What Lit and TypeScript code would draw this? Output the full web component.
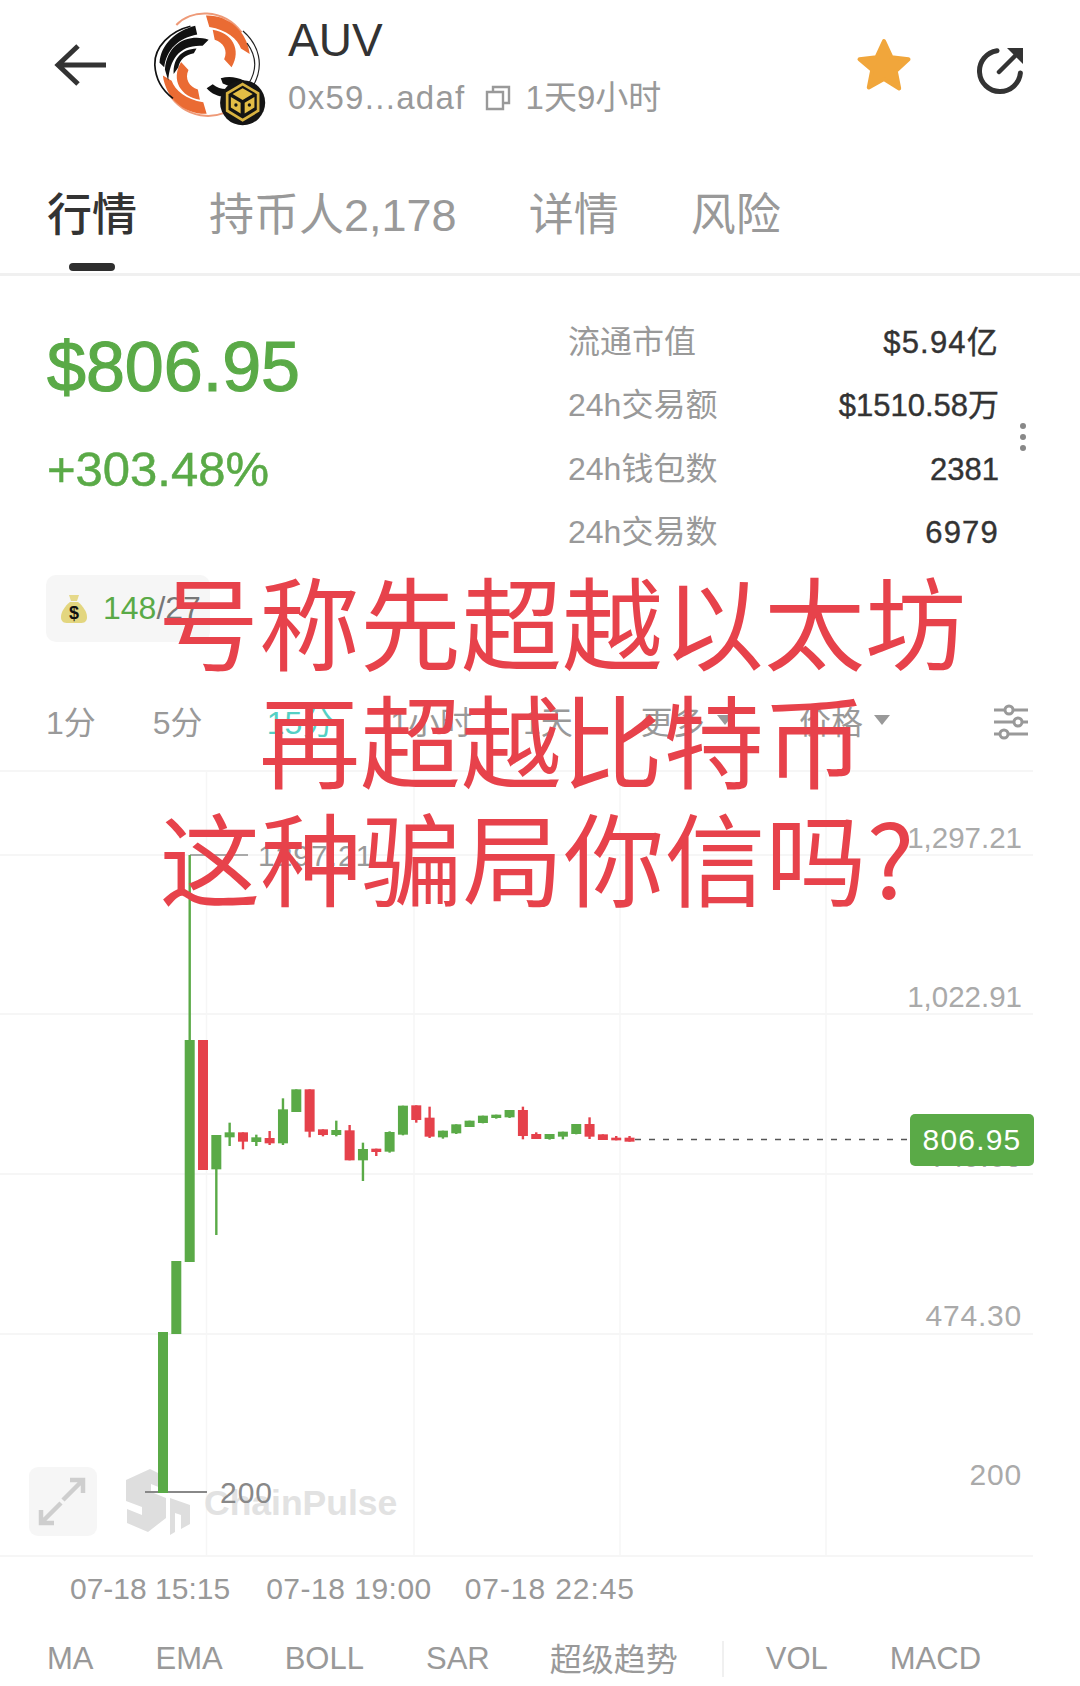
import { LitElement, html, css, svg } from "lit";
import { customElement } from "lit/decorators.js";

const G = "#5aaa47";
const R = "#e5414b";
type C = [number, number, number, number, number, 0 | 1]; // x, bodyTop, bodyBottom, wickTop, wickBottom, red?
const z5 = (i: number, a: number, b: number, c: number, d: number, r: 0 | 1): C => [163 + i * 13.33, 1020 + a / 3, 1020 + b / 3, 1020 + c / 3, 1020 + d / 3, r];
const z6 = (i: number, a: number, b: number, c: number, d: number, r: 0 | 1): C => [163 + i * 13.33, 1080 + a / 3, 1080 + b / 3, 1080 + c / 3, 1080 + d / 3, r];
const candles: C[] = [
  [163, 1332, 1493, 1332, 1493, 0],
  [176.3, 1261, 1334, 1261, 1334, 0],
  [189.7, 1040, 1262, 855, 1262, 0],
  z5(3, 60, 450, 60, 450, 1),
  z5(4, 345, 448, 345, 645, 0),
  z5(5, 337, 352, 308, 378, 0),
  z5(6, 337, 365, 337, 388, 1),
  z5(7, 352, 366, 344, 378, 0),
  z5(8, 354, 370, 333, 375, 1),
  z5(9, 268, 370, 235, 375, 0),
  z5(10, 208, 276, 208, 276, 0),
  z5(11, 208, 335, 208, 352, 1),
  z5(12, 328, 345, 328, 349, 1),
  z5(13, 330, 345, 302, 349, 0),
  z5(14, 331, 421, 315, 421, 1),
  z5(15, 387, 421, 368, 483, 0),
  z5(16, 386, 396, 386, 408, 1),
  z5(17, 336, 395, 334, 398, 0),
  z5(18, 257, 344, 257, 346, 0),
  z5(19, 256, 300, 256, 308, 1),
  z5(20, 293, 350, 260, 354, 1),
  z6(21, 152, 172, 152, 176, 0),
  z6(22, 133, 160, 133, 162, 0),
  z6(23, 122, 141, 122, 141, 0),
  z6(24, 107, 129, 107, 130, 0),
  z6(25, 104, 114, 104, 116, 0),
  z6(26, 90, 112, 90, 114, 0),
  z6(27, 90, 168, 80, 178, 1),
  z6(28, 162, 177, 157, 177, 1),
  z6(29, 162, 177, 162, 179, 0),
  z6(30, 155, 170, 155, 178, 0),
  z6(31, 132, 162, 132, 163, 0),
  z6(32, 132, 170, 112, 177, 1),
  z6(33, 163, 180, 163, 180, 1),
  z6(34, 173, 181, 168, 181, 1),
  z6(35, 173, 185, 168, 185, 1),
];

const orange = svg`
  <path d="M108 74C150 28 245 22 302 96" fill="none" stroke="#ee9a78" stroke-width="6"/>
  <path d="M196 46C262 44 318 92 326 160L300 144C290 116 258 88 206 80z" fill="#ea6b33"/>
  <path d="M216 88C272 96 304 146 272 200L250 176C262 150 248 126 222 118z" fill="#ea6b33"/>
`;

@customElement("app-root")
export class AppRoot extends LitElement {
  static styles = css`
    :host { display: block; width: 1080px; height: 1686px; overflow: hidden; position: relative; background: #fff;
      font-family: "Liberation Sans", "Noto Sans CJK SC", sans-serif; color: #333; }
    .header { height: 133px; display: flex; align-items: flex-start; }
    .back { width: 60px; height: 50px; margin: 40px 0 0 52px; flex: none; }
    .logo { width: 140px; height: 130px; margin-left: 28px; flex: none; }
    .title { margin-left: 8px; padding-top: 12px; flex: 1; }
    .name { font-size: 46px; line-height: 56px; }
    .sub { display: flex; align-items: center; font-size: 33px; line-height: 44px; color: #999; margin-top: 8px; }
    .addr { letter-spacing: 1.3px; }
    .sub svg { width: 28px; height: 28px; margin: 0 14px 0 18px; }
    .star { width: 66px; height: 66px; margin: 32px 0 0 0; flex: none; }
    .share { width: 54px; height: 54px; margin: 43px 52px 0 57px; flex: none; }

    .tabs { height: 140px; border-bottom: 3px solid #f0f0f0; display: flex; gap: 72px; padding-left: 47px; font-size: 45px; line-height: 60px; color: #999; }
    .tabs span { padding-top: 53px; }
    .tabs .on { color: #333; font-weight: 500; position: relative; }
    .tabs .on::after { content: ""; position: absolute; left: 22px; right: 22px; top: 130px; height: 8px; background: #2e2e2e; border-radius: 4px; }

    .stats { display: flex; padding: 31px 0 0 47px; }
    .price { width: 521px; flex: none; color: #5aaa47; }
    .big { font-size: 70px; line-height: 80px; margin-top: 20px; -webkit-text-stroke: 1.2px #5aaa47; }
    .chg { font-size: 49px; line-height: 60px; margin-top: 32px; -webkit-text-stroke: 0.5px #5aaa47; }
    .grid { width: 431px; flex: none; margin-top: 3.5px; }
    .row { display: flex; justify-content: space-between; height: 63.5px; line-height: 63.5px; align-items: baseline; font-size: 32px; color: #999; }
    .row b { font-weight: 400; color: #333; font-size: 31px; -webkit-text-stroke: 0.4px #333; }
    .row b.wide { letter-spacing: 1.2px; }
    .dots { margin: 3px 0 0 21px; align-self: center; width: 6px; display: flex; flex-direction: column; gap: 5px; }
    .dots i { display: block; width: 6px; height: 6px; border-radius: 50%; background: #888; }

    .badge { margin: 10.5px 0 0 46px; width: 164px; height: 67px; border-radius: 10px; background: #f6f6f6; display: flex; align-items: center; box-sizing: border-box; padding-left: 14px; font-size: 32px; color: #5aaa47; }
    .badge svg { width: 28px; height: 30px; margin-right: 15px; }
    .badge em { font-style: normal; color: #777; }

    .periods { margin-top: 48px; height: 60px; padding-left: 46px; display: flex; align-items: center; font-size: 32px; color: #999; }
    .periods .p2 { margin-left: 57px; }
    .periods .p3 { margin-left: 64px; color: #55d0c4; }
    .periods .p4 { margin-left: 56px; }
    .periods .p5 { margin-left: 51px; }
    .periods .more { margin-left: 68px; display: flex; align-items: center; gap: 12px; }
    .periods .px { margin-left: 66px; display: flex; align-items: center; gap: 11px; }
    .periods i { display: block; width: 0; height: 0; border-left: 8px solid transparent; border-right: 8px solid transparent; border-top: 10px solid #999; }
    .periods svg { width: 36px; height: 36px; margin: 4px 51px 0 auto; }

    .chart { margin-top: 20px; height: 787px; }
    .chart svg { display: block; width: 1080px; height: 787px; }
    .chart text { font-family: "Liberation Sans", sans-serif; font-size: 30px; }
    .ax { fill: #aaa; }
    .ax1 { letter-spacing: 0.8px; }
    .ax2 { fill: #999; letter-spacing: 1px; }
    .chart text.wm { font-weight: 700; font-size: 35.5px; fill: #e2e2e2; }
    .tag { fill: #fff; letter-spacing: 1.2px; }

    .times { margin-top: 12px; height: 40px; display: flex; padding-left: 70px; font-size: 30px; line-height: 40px; color: #999; }
    .t2 { margin-left: 36px; letter-spacing: 0.5px; }
    .t3 { margin-left: 33px; letter-spacing: 0.9px; }
    .inds { margin-top: 28px; height: 44px; display: flex; align-items: center; gap: 62px; padding-left: 47px; font-size: 31px; color: #999; }
    .inds .zh { font-size: 32px; margin: 0 0 4px -2px; }
    .inds .div { width: 2px; height: 36px; background: #f0f0f0; margin: 0 -20px 0 -18px; }

    .overlay { position: absolute; left: 158px; top: 560px; width: 808px; text-align: center; font-size: 101px; line-height: 118px; color: #e7424b; font-family: "Noto Sans CJK SC", sans-serif; pointer-events: none; white-space: nowrap; }
    .overlay div:last-child { padding-right: 50px; }
  `;

  render() {
    return html`
      <div class="header">
        <svg class="back" viewBox="0 0 60 50"><path d="M54 25H8M26 6L6 25l20 19" fill="none" stroke="#333" stroke-width="5"/></svg>
        <svg class="logo" viewBox="0 0 416 386">
          ${orange}
          <g transform="rotate(180 197 192)">${orange}</g>
          <path d="M150 78C90 92 42 140 44 192 46 232 66 268 98 292" fill="none" stroke="#111" stroke-width="5"/>
          <path d="M164 76C104 92 62 132 58 186L72 200C78 146 116 112 170 102z" fill="#111"/>
          <path d="M204 118C150 100 82 122 74 206L84 240C88 176 118 132 186 136z" fill="#111"/>
          <path d="M168 144C124 146 98 172 100 220L114 200C118 176 136 162 160 158z" fill="#111"/>
          <path d="M306 92C352 132 372 192 336 256" fill="none" stroke="#222" stroke-width="3.5"/>
          <path d="M318 128C346 166 350 206 322 250" fill="none" stroke="#222" stroke-width="3.5"/>
          <path d="M240 232C264 226 286 228 310 240L280 262 246 248z" fill="#111"/>
          <path d="M198 262L216 250C232 262 246 266 262 264L264 286C240 290 216 282 198 262z" fill="#111"/>
          <circle cx="305" cy="305" r="67" fill="#141414"/>
          <path d="M305 250l46 27v52l-46 28-46-28v-52z" fill="none" stroke="#d8b240" stroke-width="8"/>
          <path d="M305 262l30 17-30 18-30-18zM270 288l29 17v32l-29-18zM340 288l-29 17v32l29-18z" fill="#e3bd45"/>
          <circle cx="285" cy="312" r="5" fill="#141414"/><circle cx="325" cy="312" r="5" fill="#141414"/>
        </svg>
        <div class="title">
          <div class="name">AUV</div>
          <div class="sub"><span class="addr">0x59...adaf</span><svg viewBox="0 0 28 28"><path d="M9 8V3h16v16h-6M3 8h16v17H3z" fill="none" stroke="#999" stroke-width="2.4"/></svg>1天9小时</div>
        </div>
        <svg class="star" viewBox="0 0 66 66"><path d="M33 9l7.4 16.2 17.1 2-12.7 11.9 3.4 17.4L33 47l-15.2 8.5 3.4-17.4L8.500 27.200l17.100-2z" fill="#f1a63b" stroke="#f1a63b" stroke-width="4" stroke-linejoin="round"/></svg>
        <svg class="share" viewBox="0 0 54 54"><path d="M23 7.700A20.500 20.500 0 1 0 46.400 30" fill="none" stroke="#333" stroke-width="5" stroke-linecap="round"/><path d="M25 29L41 13" stroke="#333" stroke-width="4.500" stroke-linecap="round"/><path d="M33 5h16v16z" fill="#333"/></svg>
      </div>

      <div class="tabs">
        <span class="on">行情</span><span>持币人2,178</span><span>详情</span><span>风险</span>
      </div>

      <div class="stats">
        <div class="price"><div class="big">$806.95</div><div class="chg">+303.48%</div></div>
        <div class="grid">
          <div class="row"><span>流通市值</span><b class="wide">$5.94亿</b></div>
          <div class="row"><span>24h交易额</span><b>$1510.58万</b></div>
          <div class="row"><span>24h钱包数</span><b>2381</b></div>
          <div class="row"><span>24h交易数</span><b class="wide">6979</b></div>
        </div>
        <div class="dots"><i></i><i></i><i></i></div>
      </div>

      <div class="badge">
        <svg viewBox="0 0 28 30"><path d="M9 1h10l-2 6h-6z" fill="#e6d98a"/><path d="M10 8h8c5 4 9 10 9 15 0 5-3 6-7 6H8c-4 0-7-1-7-6 0-5 4-11 9-15z" fill="#e3d67f"/><text x="14" y="25" text-anchor="middle" font-family="Liberation Sans" font-weight="700" font-size="18" fill="#111">$</text></svg>
        <span>148<em>/27</em></span>
      </div>

      <div class="periods">
        <span>1分</span><span class="p2">5分</span><span class="p3">15分</span><span class="p4">1小时</span><span class="p5">1天</span>
        <span class="more">更多<i></i></span>
        <span class="px">价格<i></i></span>
        <svg viewBox="0 0 36 36" fill="none" stroke="#999" stroke-width="3"><path d="M1 6h11M20 6h15M1 18h20M29 18h6M1 30h6M15 30h20"/><circle cx="16" cy="6" r="4"/><circle cx="25" cy="18" r="4"/><circle cx="11" cy="30" r="4"/></svg>
      </div>

      <div class="chart">
        <svg viewBox="0 770 1080 787">
          ${[771, 855, 1014, 1174, 1334, 1556].map((y) => svg`<line x1="0" x2="1033" y1=${y} y2=${y} stroke="#f3f3f3" stroke-width="1.5"/>`)}
          ${[206.5, 414, 620, 826].map((x) => svg`<line x1=${x} x2=${x} y1="770" y2="1557" stroke="#f6f6f6" stroke-width="1.5"/>`)}

          <rect x="29" y="1467" width="68" height="69" rx="9" fill="#f6f6f6"/>
          <path d="M70 1480h13v13M83 1480l-20 20M41 1510v13h13M41 1523l20-20" fill="none" stroke="#cecece" stroke-width="4.500"/>
          <path d="M150 1469l16 8v13l-15-6v8l15 6v20l-18 14-21-9v-14l15 6v-8l-16-6v-21z" fill="#dedede"/>
          <path d="M170 1498l20 7v19l-9 5v-14l-6-2v19l-5 3z" fill="#dedede"/>
          <text class="wm" x="204" y="1515">ChainPulse</text>

          <text class="ax" x="1022" y="848" text-anchor="end" style="font-size:29.500px">1,297.21</text>
          <text class="ax" x="1022" y="1007" text-anchor="end" style="font-size:29.500px">1,022.91</text>
          <text class="ax" x="1022" y="1167" text-anchor="end">749.60</text>
          <text class="ax ax1" x="1022" y="1326" text-anchor="end">474.30</text>
          <text class="ax ax1" x="1022" y="1485" text-anchor="end">200</text>

          <line x1="190" x2="248" y1="855" y2="855" stroke="#aaa" stroke-width="2"/>
          <text class="ax2" x="258" y="866">1297.21</text>
          <line x1="145" x2="207" y1="1492" y2="1492" stroke="#888" stroke-width="2"/>
          <text class="ax2" style="fill:#888" x="220" y="1503">200</text>

          ${candles.map(([x, a, b, c, d, r]) => {
            const col = r ? R : G;
            return svg`<rect x=${x - 1.2} y=${c} width="2.4" height=${d - c} fill=${col}/><rect x=${x - 5} y=${a} width="10" height=${b - a} fill=${col}/>`;
          })}

          <line x1="635" x2="910" y1="1139.5" y2="1139.5" stroke="#555" stroke-width="1.5" stroke-dasharray="6 8"/>
          <rect x="910" y="1114" width="124" height="52" rx="5" fill=${G}/>
          <text class="tag" x="972" y="1150" text-anchor="middle">806.95</text>
        </svg>
      </div>

      <div class="times"><span>07-18 15:15</span><span class="t2">07-18 19:00</span><span class="t3">07-18 22:45</span></div>
      <div class="inds">
        <span>MA</span><span>EMA</span><span>BOLL</span><span>SAR</span><span class="zh">超级趋势</span><i class="div"></i><span>VOL</span><span>MACD</span>
      </div>

      <div class="overlay"><div>号称先超越以太坊</div><div>再超越比特币</div><div>这种骗局你信吗?</div></div>
    `;
  }
}
